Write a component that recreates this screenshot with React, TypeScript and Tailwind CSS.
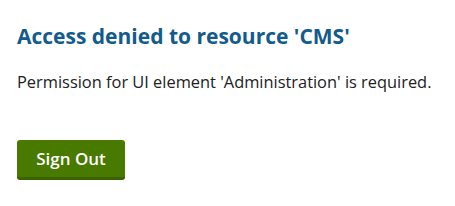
export default function App() {
  return (
    <div className="min-h-screen bg-white px-[17px] pt-[22px] font-['Open_Sans','Noto_Sans',sans-serif]">
      <h1 className="text-[21px] font-bold leading-[28px] text-[#125b8d]">
        Access denied to resource 'CMS'
      </h1>
      <p className="mt-[20px] text-[16.4px] leading-[24px] text-[#222222]">
        Permission for UI element 'Administration' is required.
      </p>
      <button className="mt-[46px] h-[40px] w-[108px] rounded-[3px] border-b-[3px] border-[#3a6300] bg-[#487a00] text-[17px] font-semibold text-white">
        Sign Out
      </button>
    </div>
  );
}
